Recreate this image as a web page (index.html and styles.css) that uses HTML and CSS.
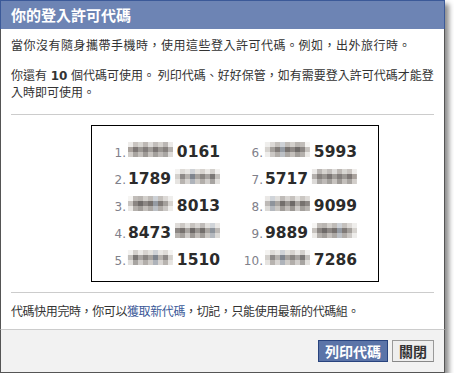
FILE: index.html
```html
<!DOCTYPE html>
<html>
    <head>
        <meta charset="utf-8">
        <link rel="stylesheet" href="styles.css">
    </head>
    <body>
        <div class="dialog">
            <div class="dialog-title">你的登入許可代碼</div>
            <div class="dialog-body">
                <p class="text text-wide">當你沒有隨身攜帶手機時，使用這些登入許可代碼。例如，出外旅行時。</p>
                <p class="text">你還有 <b class="count">10</b> 個代碼可使用。 列印代碼、好好保管，如有需要登入許可代碼才能登入時即可使用。</p>
                <hr class="rule">
                <div class="code-box">
                    <ol class="codes">
                        <li class="code"><span class="code-num">1.</span><span class="blur blur-a"></span><span class="digits">0161</span></li>
                        <li class="code"><span class="code-num">2.</span><span class="digits">1789</span><span class="blur blur-b"></span></li>
                        <li class="code"><span class="code-num">3.</span><span class="blur blur-c"></span><span class="digits">8013</span></li>
                        <li class="code"><span class="code-num">4.</span><span class="digits">8473</span><span class="blur blur-d"></span></li>
                        <li class="code"><span class="code-num">5.</span><span class="blur blur-b flip"></span><span class="digits">1510</span></li>
                        <li class="code"><span class="code-num">6.</span><span class="blur blur-c flip"></span><span class="digits">5993</span></li>
                        <li class="code"><span class="code-num">7.</span><span class="digits">5717</span><span class="blur blur-a flip"></span></li>
                        <li class="code"><span class="code-num">8.</span><span class="blur blur-d flip"></span><span class="digits">9099</span></li>
                        <li class="code"><span class="code-num">9.</span><span class="digits">9889</span><span class="blur blur-c"></span></li>
                        <li class="code"><span class="code-num">10.</span><span class="blur blur-b"></span><span class="digits">7286</span></li>
                    </ol>
                </div>
                <hr class="rule">
                <p class="text text-narrow">代碼快用完時，你可以<a href="#" class="link">獲取新代碼</a>，切記，只能使用最新的代碼組。</p>
            </div>
            <div class="dialog-footer">
                <button class="btn btn-primary">列印代碼</button>
                <button class="btn">關閉</button>
            </div>
        </div>
    </body>
</html>
```

FILE: styles.css
```css
* {
    box-sizing: border-box;
}

body {
    margin: 0;
    background: #fff;
    font-family: "Noto Sans CJK TC", "DejaVu Sans", sans-serif;
    font-size: 12px;
    color: #333;
}

.dialog {
    width: 445px;
    box-shadow: 4px 4px 5px rgba(0, 0, 0, 0.45);
}

.dialog-title {
    height: 29px;
    padding-left: 10px;
    background: #6d84b4;
    border: 1px solid #3b5998;
    border-bottom: none;
    color: #fff;
    font-size: 15px;
    font-weight: bold;
    line-height: 27px;
}

.dialog-body {
    padding: 8px 10px 11px 10px;
    background: #fff;
    border-left: 1px solid #555;
    border-right: 1px solid #555;
}

.text {
    margin: 0 0 15px 0;
    line-height: 15px;
}

.text-wide {
    letter-spacing: 0.5px;
}

.text-narrow {
    letter-spacing: -0.4px;
}

.text:last-child {
    margin: 10px 0 0 0;
}

.count {
    display: inline-block;
    margin: 0 1px;
    font-family: "DejaVu Sans", sans-serif;
    font-size: 12px;
    line-height: 15px;
}

.link {
    color: #3b5998;
    text-decoration: none;
}

.rule {
    height: 0;
    margin: 9px 0 10px 0;
    border: none;
    border-top: 1px solid #ccc;
}

.code-box + .rule {
    margin: 10px 0 0 0;
}

.code-box {
    width: 288px;
    margin-left: 80px;
    border: 1px solid #000;
    padding: 12px 0 8px 14px;
}

.codes {
    display: grid;
    grid-template-columns: repeat(2, 114px);
    grid-template-rows: repeat(5, 27px);
    grid-auto-flow: column;
    column-gap: 23px;
    margin: 0;
    padding: 0;
    list-style: none;
}

.code {
    display: flex;
    align-items: baseline;
    gap: 4px;
    padding-top: 4px;
}

.code-num {
    width: 20px;
    margin-right: -2px;
    text-align: right;
    font-family: "DejaVu Sans", sans-serif;
    font-size: 12px;
    color: #80808a;
}

.digits {
    font-family: "DejaVu Sans", sans-serif;
    font-size: 15.5px;
    font-weight: bold;
    color: #2b2b2b;
}

.blur {
    display: inline-block;
    width: 45px;
    height: 15px;
    margin-bottom: -1px;
    background-size: 45px 5px;
    background-repeat: no-repeat;
    background-position: 0 0, 0 5px, 0 10px;
}

.flip {
    transform: scaleX(-1);
}

.blur-a {
    background-image:
        linear-gradient(90deg, #eeecea 0 5px, #c9c4c0 5px 10px, #d8d6d2 10px 15px, #bdb8b4 15px 20px, #dedcda 20px 25px, #c2bebb 25px 30px, #d6d3cf 30px 35px, #bbb7b4 35px 40px, #eceae8 40px 45px),
        linear-gradient(90deg, #a9a29d 0 5px, #7d7775 5px 10px, #9c9894 10px 15px, #827d7b 15px 20px, #a19d99 20px 25px, #7b7674 25px 30px, #9a9692 30px 35px, #86817e 35px 40px, #b4b0ad 40px 45px),
        linear-gradient(90deg, #d2ceca 0 5px, #a8a4a0 5px 10px, #c4c0bc 10px 15px, #9e9a96 15px 20px, #c7c3bf 20px 25px, #a3a09c 25px 30px, #bebab7 30px 35px, #a9a6a3 35px 40px, #dcdad8 40px 45px);
}

.blur-b {
    background-image:
        linear-gradient(90deg, #f4f3f1 0 5px, #dedbd7 5px 10px, #e9e7e4 10px 15px, #cfd2d6 15px 20px, #e4e2de 20px 25px, #d7d3cf 25px 30px, #ebe9e6 30px 35px, #d3d0cc 35px 40px, #f3f2f0 40px 45px),
        linear-gradient(90deg, #d3d0cc 0 5px, #8e8a88 5px 10px, #b6b2ae 10px 15px, #7f858e 15px 20px, #a7a39f 20px 25px, #8a8683 25px 30px, #a9a5a2 30px 35px, #7b7876 35px 40px, #c2bfbb 40px 45px),
        linear-gradient(90deg, #e6e4e1 0 5px, #b7b3af 5px 10px, #d8d5d2 10px 15px, #aeb3ba 15px 20px, #cfccc8 20px 25px, #b2aeaa 25px 30px, #d1cecb 30px 35px, #a7a4a1 35px 40px, #e2e0dd 40px 45px);
}

.blur-c {
    background-image:
        linear-gradient(90deg, #f6f5f3 0 5px, #c1bdb9 5px 10px, #b9b5b1 10px 15px, #d3d0cc 15px 20px, #bfbbb7 20px 25px, #cdd1d6 25px 30px, #c4c0bc 30px 35px, #dcd9d6 35px 40px, #efeeec 40px 45px),
        linear-gradient(90deg, #c7c3bf 0 5px, #8b8683 5px 10px, #6f6b69 10px 15px, #8e8986 15px 20px, #77726f 20px 25px, #959ba3 25px 30px, #807b78 30px 35px, #a4a09c 35px 40px, #d6d3cf 40px 45px),
        linear-gradient(90deg, #ebe9e6 0 5px, #b4b0ac 5px 10px, #a29e9a 10px 15px, #c3bfbb 15px 20px, #aca8a4 20px 25px, #bcc0c5 25px 30px, #b1ada9 30px 35px, #cbc8c5 35px 40px, #eeedeb 40px 45px);
}

.blur-d {
    background-image:
        linear-gradient(90deg, #dedbd8 0 5px, #cbc7c3 5px 10px, #e3e1de 10px 15px, #c6c2be 15px 20px, #d8d5d2 20px 25px, #bfbbb8 25px 30px, #e1dfdc 30px 35px, #d0d4d9 35px 40px, #eae8e6 40px 45px),
        linear-gradient(90deg, #8c8784 0 5px, #77726f 5px 10px, #a9a5a1 10px 15px, #6e6a68 15px 20px, #9a9692 20px 25px, #736f6c 25px 30px, #aaa6a2 30px 35px, #8e949c 35px 40px, #bdb9b6 40px 45px),
        linear-gradient(90deg, #b9b5b1 0 5px, #a4a09c 5px 10px, #cfccc9 10px 15px, #9c9894 15px 20px, #c2beba 20px 25px, #a09c98 25px 30px, #cbc8c4 30px 35px, #b4b8be 35px 40px, #dcdad7 40px 45px);
}

.dialog-footer {
    display: flex;
    justify-content: flex-end;
    gap: 4px;
    padding: 10px 10px 10px 10px;
    background: #f2f2f2;
    border: 1px solid #555;
    border-top: 1px solid #ccc;
}

.btn {
    height: 22px;
    margin: 0;
    padding: 0 6px;
    border: 1px solid #999;
    border-bottom-color: #888;
    background: #eee;
    color: #333;
    font-family: "Noto Sans CJK TC", sans-serif;
    font-size: 14px;
    font-weight: bold;
    line-height: 20px;
}

.btn-primary {
    background: #5b74a8;
    border-color: #29447e;
    color: #fff;
}
```
